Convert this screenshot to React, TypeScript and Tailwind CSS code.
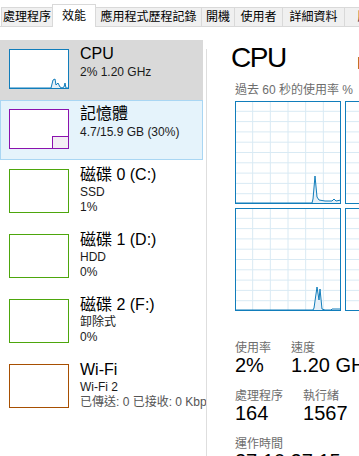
import React from 'react';

const tabs = [
  { label: '處理程序', cls: 'w-[52px] h-[19px] bg-[#f0f0f0] border-l border-t border-r' },
  { label: '效能', cls: 'w-[44px] h-[23px] -mb-px -ml-px bg-white border-l border-t border-r relative z-10' },
  { label: '應用程式歷程記錄', cls: 'w-[106px] h-[19px] bg-[#f0f0f0] border-t border-r' },
  { label: '開機', cls: 'w-[33px] h-[19px] bg-[#f0f0f0] border-t border-r' },
  { label: '使用者', cls: 'w-[48px] h-[19px] bg-[#f0f0f0] border-t border-r' },
  { label: '詳細資料', cls: 'w-[62px] h-[19px] bg-[#f0f0f0] border-t border-r' },
  { label: '服務', cls: 'w-[50px] h-[19px] bg-[#f0f0f0] border-t border-r' },
];

const W = 106;
const H = 103;

function CoreGraph({ points }: { points?: number[][] }) {
  const cols = [1, 2, 3, 4, 5].map((i) => (i * W) / 6);
  const rows = [1, 2, 3, 4, 5, 6, 7, 8, 9].map((j) => (j * H) / 10);
  const line = points ? points.map((p) => p.join(',')).join(' ') : '';
  return (
    <svg width={W} height={H} viewBox={`0 0 ${W} ${H}`} className="block shrink-0">
      {cols.map((x) => (
        <line key={'c' + x} x1={x} y1={0} x2={x} y2={H} stroke="#d9eaf4" strokeWidth={1} />
      ))}
      {rows.map((y) => (
        <line key={'r' + y} x1={0} y1={y} x2={W} y2={y} stroke="#d9eaf4" strokeWidth={1} />
      ))}
      {points && <polygon points={`${line} ${W},${H} 0,${H}`} fill="#e6f0f8" />}
      {points && <polyline points={line} fill="none" stroke="#117dbb" strokeWidth={1} />}
      <rect x={0.5} y={0.5} width={W - 1} height={H - 1} fill="none" stroke="#117dbb" strokeWidth={1} />
    </svg>
  );
}

const core1 = [[0, 102], [77, 102], [78, 98], [80, 75], [82, 96], [84, 99], [90, 100], [97, 100], [99, 98], [101, 100], [106, 99]];
const core3 = [[0, 102], [78, 102], [79, 100], [82, 79], [84, 92], [85, 81], [87, 101], [90, 102], [96, 102], [97, 101], [106, 101]];
const cpuThumb = [[0, 39], [42, 39], [44, 31], [46, 30], [47, 36], [49, 34], [51, 38], [53, 39], [55, 38], [56, 34], [57, 39], [60, 39]];

function Stat({ label, value }: { label: string; value: string }) {
  return (
    <div className="shrink-0 whitespace-nowrap">
      <div className="text-[12px] leading-[14px] text-[#6d6d6d]">{label}</div>
      <div className="text-[20px] leading-[20px] text-black">{value}</div>
    </div>
  );
}

export default function App() {
  return (
    <div className="w-[359px] h-[456px] overflow-hidden bg-white flex flex-col font-['Liberation_Sans','Noto_Sans_CJK_TC',sans-serif] text-black">
      {/* tabs */}
      <div className="h-[27px] shrink-0 flex items-end pl-px border-b border-[#d9d9d9] whitespace-nowrap">
        {tabs.map((t) => (
          <div
            key={t.label}
            className={`${t.cls} shrink-0 border-[#d9d9d9] flex items-center justify-center text-[12px] leading-[14px] overflow-hidden`}
          >
            {t.label}
          </div>
        ))}
      </div>

      <div className="flex flex-1 min-h-0">
        {/* left list */}
        <div className="w-[206px] shrink-0 overflow-hidden pt-[13px] flex flex-col">
          <div className="w-[203px] h-[60px] flex pl-[9px] pt-[9px] bg-[#d9d9d9]">
            <div className="w-[60px] h-[40px] shrink-0 border border-[#117dbb] bg-white">
              <svg width={58} height={38} viewBox="1 1 58 38" className="block">
                <polygon points={`${cpuThumb.map((p) => p.join(',')).join(' ')} 60,40 0,40`} fill="#e6f0f8" />
                <polyline points={cpuThumb.map((p) => p.join(',')).join(' ')} fill="none" stroke="#117dbb" strokeWidth={1} />
              </svg>
            </div>
            <div className="ml-[11px] -mt-[5px] whitespace-nowrap">
              <div className="text-[16px] leading-[20px]">CPU</div>
              <div className="mt-px text-[12px] leading-[15px] text-[#1a1a1a]">2% 1.20 GHz</div>
            </div>
          </div>

          <div className="w-[203px] h-[60px] flex pl-[9px] pt-[9px] bg-[#e5f3fb] shadow-[inset_0_0_0_1px_#a9d6f3]">
            <div className="w-[60px] h-[40px] shrink-0 border border-[#8b12ae] bg-white flex items-end justify-end">
              <div className="w-[16px] h-[12px] border-l border-t border-[#8b12ae] bg-[#f3eef4]" />
            </div>
            <div className="ml-[11px] -mt-[5px] whitespace-nowrap">
              <div className="text-[16px] leading-[20px]">記憶體</div>
              <div className="mt-px text-[12px] leading-[15px] text-[#1a1a1a]">4.7/15.9 GB (30%)</div>
            </div>
          </div>

          {[
            { t: '磁碟 0 (C:)', a: 'SSD', b: '1%' },
            { t: '磁碟 1 (D:)', a: 'HDD', b: '0%' },
            { t: '磁碟 2 (F:)', a: '卸除式', b: '0%' },
          ].map((d) => (
            <div key={d.t} className="w-[203px] h-[65px] flex pl-[9px] pt-[9px]">
              <div className="w-[60px] h-[44px] shrink-0 border border-[#4da60c] bg-white" />
              <div className="ml-[11px] -mt-[4px] whitespace-nowrap">
                <div className="text-[16px] leading-[20px]">{d.t}</div>
                <div className="text-[12px] leading-[15px] text-[#1a1a1a]">{d.a}</div>
                <div className="text-[12px] leading-[15px] text-[#1a1a1a]">{d.b}</div>
              </div>
            </div>
          ))}

          <div className="w-[203px] h-[65px] flex pl-[9px] pt-[9px]">
            <div className="w-[60px] h-[44px] shrink-0 border border-[#a74f01] bg-white" />
            <div className="ml-[11px] -mt-[4px] whitespace-nowrap">
              <div className="text-[16px] leading-[20px]">Wi-Fi</div>
              <div className="text-[12px] leading-[15px] text-[#1a1a1a]">Wi-Fi 2</div>
              <div className="text-[12px] leading-[15px] text-[#555555]">已傳送: 0 已接收: 0 Kbps</div>
            </div>
          </div>
        </div>

        {/* splitter */}
        <div className="w-px shrink-0 mt-[22px] bg-[#dedede]" />

        {/* detail */}
        <div className="flex-1 min-w-0 overflow-hidden pl-[28px] pt-[17px]">
          <div className="flex items-start h-[28px] whitespace-nowrap">
            <div className="w-[126px] shrink-0 -ml-[4px] text-[28px] leading-[28px] tracking-[-1.5px]">CPU</div>
            <div className="mt-[10px] text-[16px] leading-[20px]">Intel(R) Core(TM) i7-8750H CPU @ 2.20GHz</div>
          </div>
          <div className="mt-[10px] text-[12px] leading-[16px] text-[#6d6d6d] whitespace-nowrap">過去 60 秒的使用率 %</div>
          <div className="mt-[3px] grid grid-cols-[106px_106px] gap-[4px] w-max">
            <CoreGraph points={core1} />
            <CoreGraph />
            <CoreGraph points={core3} />
            <CoreGraph />
          </div>

          <div className="mt-[30px] flex gap-[20px]">
            <Stat label="使用率" value="2%" />
            <Stat label="速度" value="1.20 GHz" />
          </div>
          <div className="mt-[14px] flex gap-[20px]">
            <Stat label="處理程序" value="164" />
            <Stat label="執行緒" value="1567" />
          </div>
          <div className="mt-[14px] flex gap-[20px]">
            <Stat label="運作時間" value="27:10:27:15" />
          </div>
        </div>
      </div>
    </div>
  );
}
